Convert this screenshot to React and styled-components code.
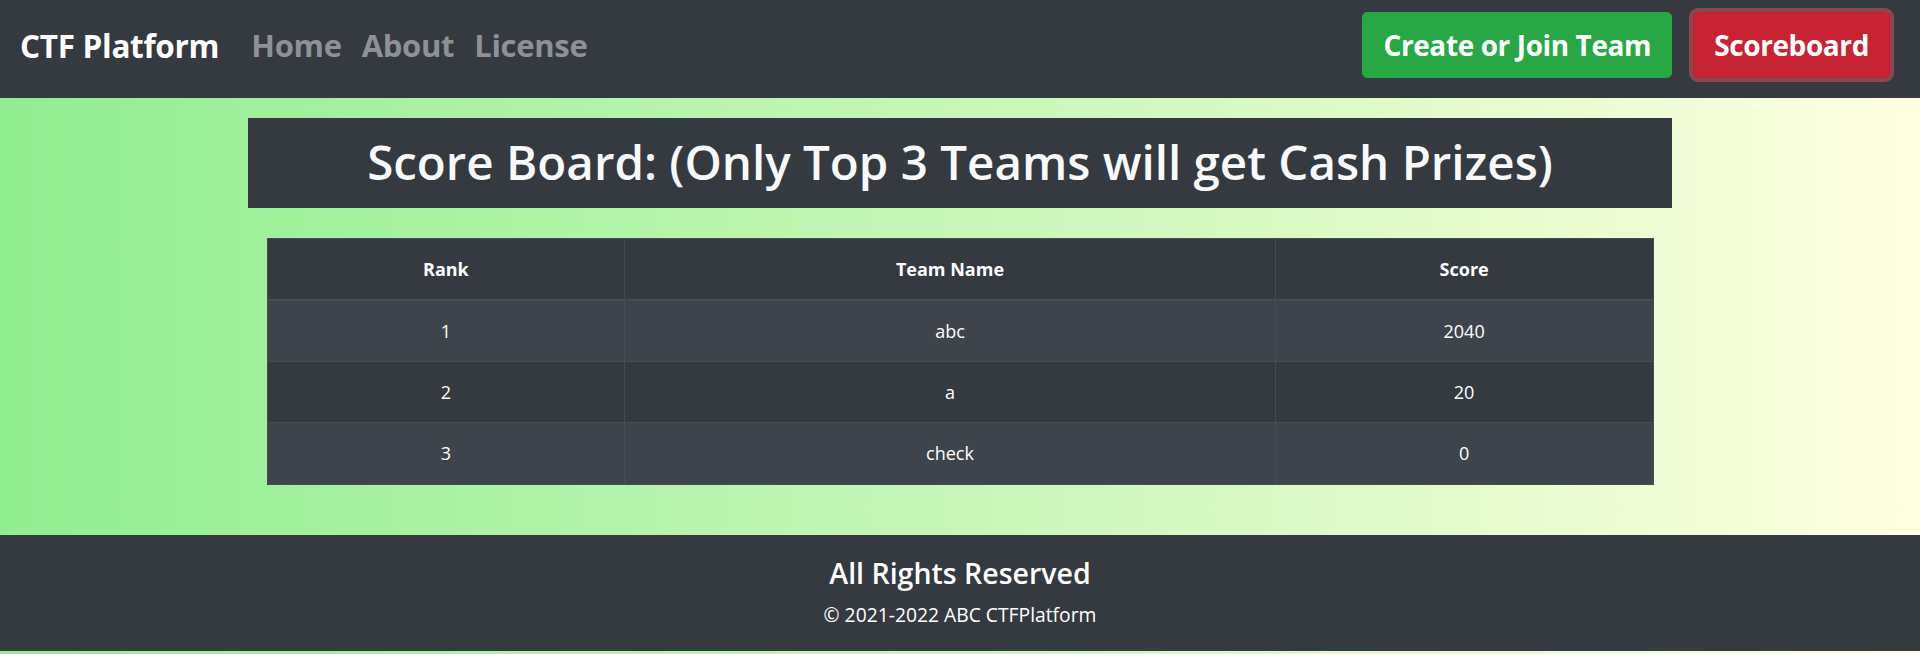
import React from 'react';
import styled, { createGlobalStyle } from 'styled-components';

const GlobalStyle = createGlobalStyle`
  * { box-sizing: border-box; }
  body {
    margin: 0;
    font-family: "Open Sans", "Noto Sans", sans-serif;
    color: #fff;
  }
`;

const teams = [
  { rank: 1, name: 'abc', score: 2040 },
  { rank: 2, name: 'a', score: 20 },
  { rank: 3, name: 'check', score: 0 },
];

function App() {
  return (
    <Page>
      <GlobalStyle />
      <Navbar>
        <Brand href="#">CTF Platform</Brand>
        <NavLinks>
          <NavLink href="#">Home</NavLink>
          <NavLink href="#">About</NavLink>
          <NavLink href="#">License</NavLink>
        </NavLinks>
        <Actions>
          <Button variant="success">Create or Join Team</Button>
          <Button variant="danger" focused>Scoreboard</Button>
        </Actions>
      </Navbar>

      <Main>
        <Title>Score Board: (Only Top 3 Teams will get Cash Prizes)</Title>
        <Table>
          <thead>
            <tr>
              <Th width={358}>Rank</Th>
              <Th width={651}>Team Name</Th>
              <Th width={378}>Score</Th>
            </tr>
          </thead>
          <tbody>
            {teams.map((t, i) => (
              <Row key={t.rank} striped={i % 2 === 0}>
                <Td>{t.rank}</Td>
                <Td>{t.name}</Td>
                <Td>{t.score}</Td>
              </Row>
            ))}
          </tbody>
        </Table>
      </Main>

      <Footer>
        <FooterTitle>All Rights Reserved</FooterTitle>
        <FooterText>© 2021-2022 ABC CTFPlatform</FooterText>
      </Footer>
    </Page>
  );
}

export default App;

const Page = styled.div`
  min-height: 680px;
  background: linear-gradient(to right, #90ee90, #ffffe0);
  padding-bottom: 30px;
`;

const Navbar = styled.nav`
  display: flex;
  align-items: center;
  height: 98px;
  padding: 12px 30px 20px 20px;
  background: #343a40;
`;

const Brand = styled.a`
  font-size: 31.5px;
  font-weight: 700;
  color: #fff;
  text-decoration: none;
  margin-right: 22px;
  letter-spacing: -0.3px;
`;

const NavLinks = styled.div`
  display: flex;
  align-items: center;
`;

const NavLink = styled.a`
  font-size: 31px;
  font-weight: 700;
  color: #8e9195;
  text-decoration: none;
  padding: 0 10px;
  letter-spacing: -0.3px;
`;

const Actions = styled.div`
  display: flex;
  align-items: center;
  gap: 21px;
  margin-left: auto;
`;

const Button = styled.button`
  height: 66px;
  padding: 0 20px;
  border: 1px solid ${p => (p.variant === 'success' ? '#28a745' : '#bd2130')};
  border-radius: 5px;
  background: ${p => (p.variant === 'success' ? '#28a745' : '#c82333')};
  color: #fff;
  font-family: "Open Sans", "Noto Sans", sans-serif;
  font-size: 28px;
  font-weight: 700;
  letter-spacing: -0.4px;
  cursor: pointer;
  box-shadow: ${p => (p.focused ? '0 0 0 4px rgba(225, 83, 97, 0.5)' : 'none')};
`;

const Main = styled.main`
  width: 1424px;
  margin: 20px auto 0;
  padding-bottom: 50px;
`;

const Title = styled.h1`
  margin: 0 0 30px;
  padding: 14px 0 16px;
  background: #343a40;
  text-align: center;
  font-size: 47.5px;
  font-weight: 600;
  line-height: 60px;
  color: #f8f9fa;
`;

const Table = styled.table`
  width: 1387px;
  margin: 0 auto;
  border-collapse: collapse;
  background: #343a40;
  font-size: 18px;
  color: #fff;
`;

const Th = styled.th`
  width: ${p => p.width}px;
  height: 61px;
  border: 1.5px solid #454d55;
  border-bottom-width: 2.5px;
  font-weight: 700;
  text-align: center;
  padding: 0 15px;
`;

const Row = styled.tr`
  background: ${p => (p.striped ? '#3e444b' : '#343a40')};
`;

const Td = styled.td`
  height: 61.5px;
  border: 1.5px solid #454d55;
  text-align: center;
  padding: 0 15px;
`;

const Footer = styled.footer`
  height: 116px;
  background: #343a40;
  text-align: center;
  padding-top: 20px;
`;

const FooterTitle = styled.h4`
  margin: 0 0 9px;
  font-size: 28.5px;
  font-weight: 600;
  line-height: 36px;
`;

const FooterText = styled.p`
  margin: 0;
  font-size: 19.3px;
  line-height: 30px;
`;
